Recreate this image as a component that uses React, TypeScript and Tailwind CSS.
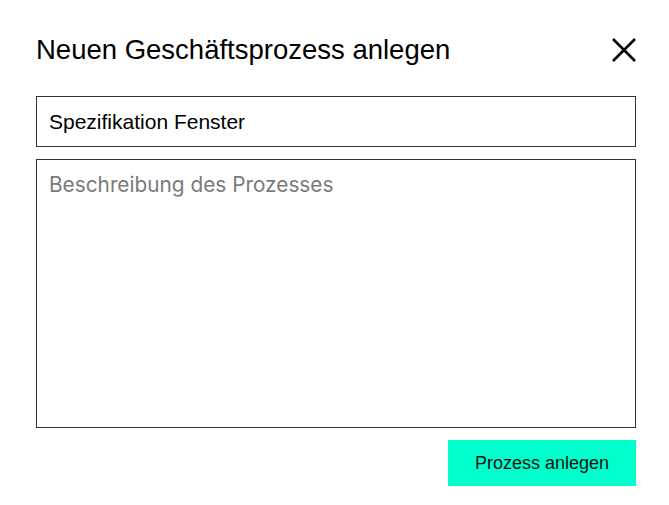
import { useState } from "react";

function CloseIcon() {
  return (
    <svg width="24" height="24" viewBox="0 0 24 24" fill="none">
      <path d="M1 1L23 23M23 1L1 23" stroke="#000" strokeWidth="2.6" />
    </svg>
  );
}

export default function App() {
  const [name, setName] = useState("Spezifikation Fenster");
  const [desc, setDesc] = useState("");

  return (
    <div className="min-h-[505px] w-[669px] bg-white font-['Liberation_Sans',Arial,sans-serif] text-black">
      <div className="ml-[36px] w-[600px] pt-[34px]">
        <div className="flex h-[32px] items-center justify-between">
          <h2 className="text-[27.5px] leading-[32px] font-normal">Neuen Geschäftsprozess anlegen</h2>
          <button className="flex h-[24px] w-[24px] items-center justify-center">
            <CloseIcon />
          </button>
        </div>

        <input
          value={name}
          onChange={(e) => setName(e.target.value)}
          className="mt-[30px] block h-[51px] w-full border border-[#333] px-[12px] text-[21px] outline-none"
        />

        <textarea
          value={desc}
          onChange={(e) => setDesc(e.target.value)}
          placeholder="Beschreibung des Prozesses"
          className="mt-[12px] block h-[269px] w-full resize-none border border-[#333] px-[12px] py-[12px] font-['Inter',sans-serif] text-[20.8px] leading-[26px] outline-none placeholder:text-[#7a7a7a]"
        />

        <div className="mt-[12px] flex justify-end">
          <button className="h-[46px] w-[188px] bg-[#00ffcc] text-[18px] text-[#111]">
            Prozess anlegen
          </button>
        </div>
      </div>
    </div>
  );
}
